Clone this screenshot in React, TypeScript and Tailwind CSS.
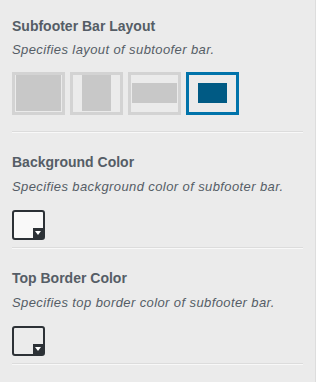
import { useState } from "react"

type Layout = "full" | "boxed" | "band" | "compact"

function LayoutOption({
  kind,
  active,
  onSelect,
}: {
  kind: Layout
  active: boolean
  onSelect: () => void
}) {
  return (
    <button
      type="button"
      onClick={onSelect}
      className={`flex h-[43px] w-[53px] border-[3px] bg-[#ebebeb] p-0 ${
        active ? "border-[#0073aa]" : "border-[#d3d3d3]"
      }`}
    >
      {kind === "full" && (
        <div className="flex h-full w-full px-px pb-px">
          <div className="h-full w-full bg-[#c8c8c8]" />
        </div>
      )}
      {kind === "boxed" && (
        <div className="flex h-full w-full justify-center pb-px">
          <div className="h-full w-[29px] bg-[#c8c8c8]" />
        </div>
      )}
      {kind === "band" && (
        <div className="w-full px-px pt-[8px]">
          <div className="h-[20px] w-full bg-[#c8c8c8]" />
        </div>
      )}
      {kind === "compact" && (
        <div className="flex w-full justify-center pt-[8px]">
          <div className="h-[20px] w-[29px] bg-[#005a84]" />
        </div>
      )}
    </button>
  )
}

function Swatch({ color }: { color: string }) {
  return (
    <button
      type="button"
      className="relative block h-[30px] w-[33px] rounded-[3px] border-2 border-[#2c3136] p-0"
      style={{ backgroundColor: color }}
    >
      <span className="absolute bottom-0 right-0 flex h-[10px] w-[10px] items-center justify-center bg-[#2c3136]">
        <svg width="6" height="4" viewBox="0 0 6 4">
          <path d="M0 0h6L3 4z" fill="#ffffff" />
        </svg>
      </span>
    </button>
  )
}

function Section({
  title,
  description,
  children,
  spacing,
}: {
  title: string
  description: string
  children: React.ReactNode
  spacing: { wrap: string; desc: string; control: string }
}) {
  return (
    <div className={`border-b border-[#dcdcdc] shadow-[0_1px_0_#f8f8f8] ${spacing.wrap}`}>
      <h3 className="text-[14px] font-bold leading-5 text-[#555d66]">{title}</h3>
      <p
        className={`${spacing.desc} text-[13px] italic leading-[18px] tracking-[0.4px] text-[#555d66]`}
      >
        {description}
      </p>
      <div className={spacing.control}>{children}</div>
    </div>
  )
}

export default function App() {
  const [layout, setLayout] = useState<Layout>("compact")
  const options: Layout[] = ["full", "boxed", "band", "compact"]
  const colorSpacing = { wrap: "pt-5 pb-[7px]", desc: "mt-[6px]", control: "mt-[14px]" }

  return (
    <div
      className="h-[382px] w-[316px] border-r border-[#dddddd] bg-[#ebebeb] pl-3 pr-3"
      style={{ fontFamily: '"Liberation Sans", Arial, sans-serif' }}
    >
      <Section
        title="Subfooter Bar Layout"
        description="Specifies layout of subtoofer bar."
        spacing={{ wrap: "pt-4 pb-4", desc: "mt-[5px]", control: "mt-[13px]" }}
      >
        <div className="flex gap-[5px]">
          {options.map((o) => (
            <LayoutOption
              key={o}
              kind={o}
              active={layout === o}
              onSelect={() => setLayout(o)}
            />
          ))}
        </div>
      </Section>
      <Section
        title="Background Color"
        description="Specifies background color of subfooter bar."
        spacing={colorSpacing}
      >
        <Swatch color="#f9f9f9" />
      </Section>
      <Section
        title="Top Border Color"
        description="Specifies top border color of subfooter bar."
        spacing={colorSpacing}
      >
        <Swatch color="#ebebeb" />
      </Section>
    </div>
  )
}
